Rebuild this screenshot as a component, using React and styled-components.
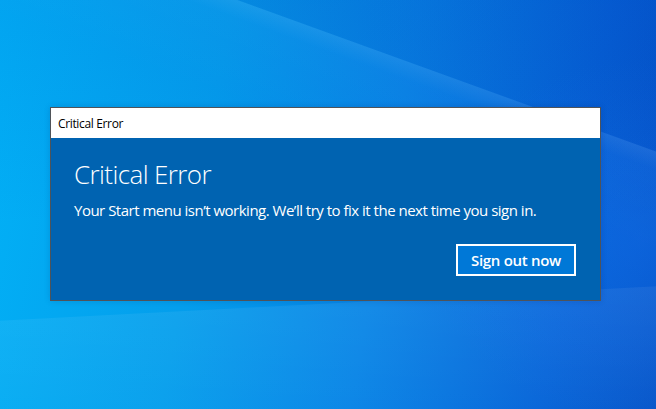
import React from 'react';
import styled, { createGlobalStyle } from 'styled-components';

const GlobalStyle = createGlobalStyle`
  html, body {
    margin: 0;
    padding: 0;
  }

  body {
    font-family: 'Open Sans', 'Noto Sans', sans-serif;
  }
`;

const Desktop = styled.div`
  width: 656px;
  height: 409px;
  overflow: hidden;
  box-sizing: border-box;
  padding: 107px 0 0 50px;
  background:
    linear-gradient(199.9deg, rgba(0, 30, 140, 0.08) 0, rgba(0, 30, 140, 0.08) 142px, rgba(255, 255, 255, 0.08) 143px, rgba(255, 255, 255, 0.02) 160px, rgba(255, 255, 255, 0) 240px),
    linear-gradient(-3deg, rgba(255, 255, 255, 0.02) 0, rgba(255, 255, 255, 0.06) 122px, rgba(255, 255, 255, 0) 123px),
    linear-gradient(180deg, rgba(0, 50, 190, 0.1) 0%, rgba(0, 50, 190, 0) 55%),
    radial-gradient(ellipse 220px 180px at 640px 240px, rgba(30, 120, 245, 0.3), rgba(30, 120, 245, 0)),
    linear-gradient(100deg, #02b1f6 0%, #049eec 32%, #0784e6 58%, #0564d8 84%, #0454c9 100%);
`;

const Window = styled.div`
  width: 551px;
  height: 194px;
  box-sizing: border-box;
  border: 1px solid #4f5359;
  display: flex;
  flex-direction: column;
  box-shadow: 0 0 6px rgba(0, 20, 80, 0.15);
`;

const TitleBar = styled.div`
  height: 30px;
  flex: none;
  background: #ffffff;
  color: #000000;
  display: flex;
  align-items: center;
  padding-left: 7px;
  font-size: 12px;
  letter-spacing: -0.35px;
`;

const Body = styled.div`
  flex: 1;
  background: #0063b1;
  color: #ffffff;
  padding: 23px 24px 24px 23px;
  display: flex;
  flex-direction: column;
`;

const Heading = styled.div`
  font-size: 26px;
  font-weight: 300;
  line-height: 26px;
  letter-spacing: -0.6px;
`;

const Message = styled.div`
  margin-top: 13px;
  font-size: 15px;
  line-height: 20px;
  letter-spacing: -0.5px;
`;

const Actions = styled.div`
  margin-top: auto;
  display: flex;
  justify-content: flex-end;
`;

const Button = styled.button`
  width: 120px;
  height: 32px;
  box-sizing: border-box;
  border: 2px solid #ffffff;
  background: #0078d7;
  color: #ffffff;
  font-family: 'Open Sans', 'Noto Sans', sans-serif;
  font-size: 15px;
  font-weight: 600;
  letter-spacing: -0.3px;
  padding: 0 0 1px;
  cursor: pointer;
`;

const App = () => (
  <>
    <GlobalStyle />
    <Desktop>
      <Window>
        <TitleBar>Critical Error</TitleBar>
        <Body>
          <Heading>Critical Error</Heading>
          <Message>Your Start menu isn’t working. We’ll try to fix it the next time you sign in.</Message>
          <Actions>
            <Button>Sign out now</Button>
          </Actions>
        </Body>
      </Window>
    </Desktop>
  </>
);

export default App;
